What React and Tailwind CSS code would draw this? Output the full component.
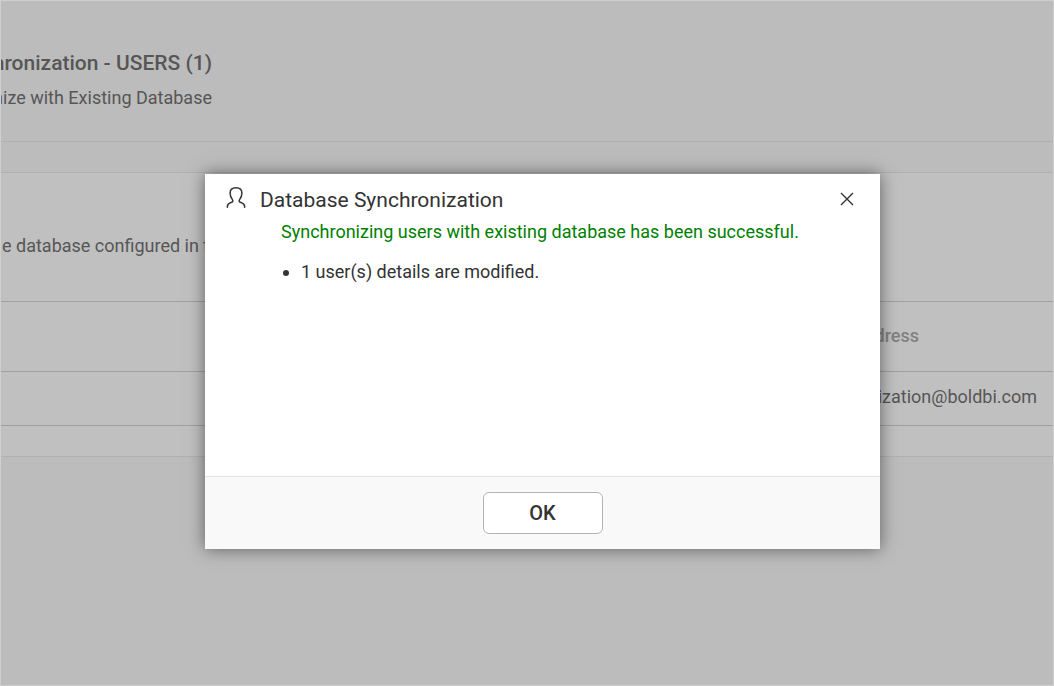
import React from "react";

function UserIcon() {
  return (
    <svg
      className="h-6 w-5 shrink-0"
      viewBox="0 0 20 24"
      fill="none"
      stroke="#333333"
      strokeWidth="1.5"
      strokeLinecap="round"
      strokeLinejoin="round"
      aria-hidden="true"
    >
      <path d="M1.4 21.3V20.4C1.4 18.6 2.5 17.6 4.2 16.9L5.6 16.3C6.9 15.7 7.2 14.8 6.4 13.6C5 11.7 4.1 9.7 4.1 7.2C4.1 3.7 6.2 1.8 10 1.8C13.8 1.8 15.9 3.7 15.9 7.2C15.9 9.7 15 11.7 13.6 13.6C12.8 14.8 13.1 15.7 14.4 16.3L15.8 16.9C17.5 17.6 18.6 18.6 18.6 20.4V21.3" />
    </svg>
  );
}

function CloseIcon() {
  return (
    <svg
      className="h-[14px] w-[14px]"
      viewBox="0 0 14 14"
      fill="none"
      stroke="#333333"
      strokeWidth="1.4"
      aria-hidden="true"
    >
      <path d="M1 1L13 13M13 1L1 13" />
    </svg>
  );
}

function SyncPage() {
  return (
    <main className="flex min-h-screen flex-col border border-[#cfcfcf] bg-[#bcbcbc] text-[#565656]">
      <header className="h-[141px] border-b border-[#b0b0b0] pt-12">
        <div className="flex w-[211px] flex-col items-end overflow-hidden whitespace-nowrap">
          <h1 className="text-[21px] leading-7 font-medium">Database Synchronization - USERS (1)</h1>
          <p className="mt-[9px] text-[18px] leading-6">Synchronize with Existing Database</p>
        </div>
      </header>
      <section className="mt-[30px] border-y border-[#b0b0b0] bg-[#c0c0c0] pb-[30px]">
        <div className="h-32 pt-[61px] pl-px">
          <p className="text-[18px] leading-6">e database configured in the site</p>
        </div>
        <table className="w-full border-collapse text-right text-[18px] leading-6">
          <thead>
            <tr className="h-[70px] border-y border-[#a0a0a0] text-[#808080]">
              <th className="pr-[134px] pb-[2px] font-medium">Email Address</th>
            </tr>
          </thead>
          <tbody>
            <tr className="h-[54px] border-b border-[#a0a0a0]">
              <td className="pr-4 pb-1">synchronization@boldbi.com</td>
            </tr>
          </tbody>
        </table>
      </section>
    </main>
  );
}

function SyncDialog() {
  return (
    <div className="absolute inset-0 flex items-start justify-center pt-[174px] pl-[31px]">
      <div
        role="dialog"
        aria-modal="true"
        aria-labelledby="dialog-title"
        className="flex w-[675px] max-w-full flex-col bg-white text-[#333333] shadow-[0_0_16px_rgba(0,0,0,0.5)]"
      >
        <div className="flex items-start pt-3 pr-[26px] pl-[21px]">
          <UserIcon />
          <h2 id="dialog-title" className="ml-[14px] flex-1 text-[21px] leading-7">
            Database Synchronization
          </h2>
          <button type="button" aria-label="Close" className="flex h-[26px] items-center">
            <CloseIcon />
          </button>
        </div>
        <div className="min-h-[262px] px-[76px] pt-[6px] text-[18px] leading-6">
          <p className="text-[#008000]">
            Synchronizing users with existing database has been successful.
          </p>
          <ul className="mt-4 list-disc pl-5">
            <li>1 user(s) details are modified.</li>
          </ul>
        </div>
        <div className="flex justify-center border-t border-[#e3e3e3] bg-[#f9f9f9] py-[15px]">
          <button
            type="button"
            className="h-[42px] w-[120px] rounded-md border border-[#b3b3b3] bg-white text-[20px] leading-6 font-medium"
          >
            OK
          </button>
        </div>
      </div>
    </div>
  );
}

export default function App() {
  return (
    <div className="relative min-h-screen overflow-hidden font-[Roboto,sans-serif]">
      <SyncPage />
      <SyncDialog />
    </div>
  );
}
